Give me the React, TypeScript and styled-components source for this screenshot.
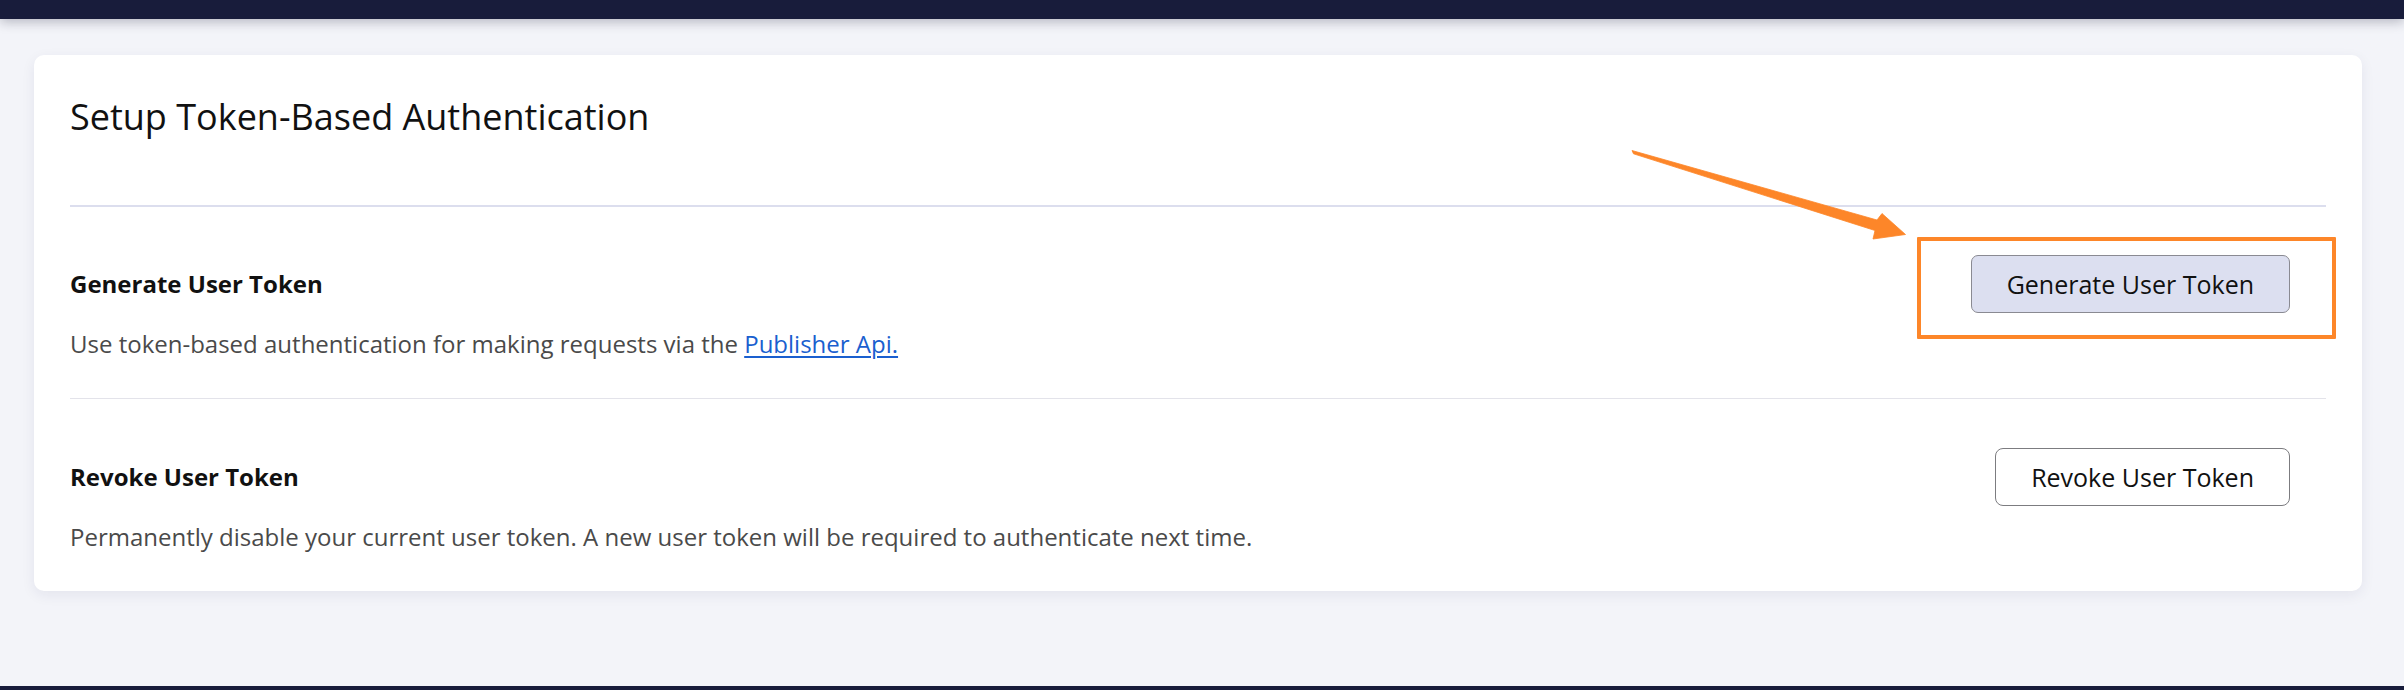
import React from "react";
import styled, { createGlobalStyle } from "styled-components";

const GlobalStyle = createGlobalStyle`
  html, body {
    margin: 0;
    padding: 0;
    background: #f3f4f9;
    font-family: "Open Sans", "Noto Sans", sans-serif;
    overflow: hidden;
  }
  * { box-sizing: border-box; }
`;

const Page = styled.div`
  position: relative;
  width: 2404px;
  height: 690px;
  display: flex;
  flex-direction: column;
  background: #f3f4f9;
`;

const TopBar = styled.div`
  height: 19px;
  flex: none;
  background: #181c3b;
  box-shadow: 0 3px 12px rgba(20, 24, 50, 0.28);
  position: relative;
  z-index: 1;
`;

const Main = styled.main`
  flex: 1;
  padding: 36px 42px 0 34px;
`;

const BottomBar = styled.div`
  height: 4px;
  flex: none;
  background: #181c3b;
`;

const Card = styled.section`
  background: #ffffff;
  border-radius: 10px;
  box-shadow: 0 4px 14px rgba(30, 35, 80, 0.07);
  padding: 37px 36px 0 36px;
`;

const Title = styled.h1`
  margin: 0;
  font-size: 36px;
  line-height: 49px;
  font-weight: 400;
  color: #111111;
  padding-bottom: 64px;
  border-bottom: 2px solid #dcdeee;
`;

const Row = styled.div<{ $last?: boolean }>`
  display: flex;
  justify-content: space-between;
  align-items: flex-start;
  padding: ${(p) => (p.$last ? "49px" : "48px")} 36px 38px 0;
  border-bottom: ${(p) => (p.$last ? "none" : "1px solid #e3e3ea")};
`;

const TextCol = styled.div`
  display: flex;
  flex-direction: column;
  gap: 28px;
  padding-top: 13px;
`;

const Heading = styled.h2`
  margin: 0;
  font-size: 24px;
  line-height: 32px;
  font-weight: 700;
  color: #111111;
`;

const Body = styled.p`
  margin: 0;
  font-size: 24px;
  line-height: 32px;
  font-weight: 400;
  color: #4a4a4a;
`;

const Link = styled.a`
  color: #1a5fcf;
  text-decoration: underline;
  text-underline-offset: 3px;
`;

const Button = styled.button<{ $primary?: boolean }>`
  height: 58px;
  padding: 0 35px;
  font-family: "Open Sans", "Noto Sans", sans-serif;
  font-size: 25px;
  font-weight: 400;
  color: #111111;
  background: ${(p) => (p.$primary ? "#dcdff0" : "#ffffff")};
  border: 1px solid ${(p) => (p.$primary ? "#8a8a92" : "#7c7c80")};
  border-radius: ${(p) => (p.$primary ? "7px" : "8px")};
  cursor: pointer;
  white-space: nowrap;
`;

const Highlight = styled.div`
  position: absolute;
  left: 1917px;
  top: 237px;
  width: 419px;
  height: 102px;
  border: 4px solid #fd8629;
  border-radius: 1px;
  pointer-events: none;
`;

const ArrowLayer = styled.svg`
  position: absolute;
  left: 0;
  top: 0;
  pointer-events: none;
`;

export default function App() {
  return (
    <>
      <GlobalStyle />
      <Page>
        <TopBar />
        <Main>
          <Card>
            <Title>Setup Token-Based Authentication</Title>
            <Row>
              <TextCol>
                <Heading>Generate User Token</Heading>
                <Body>
                  Use token-based authentication for making requests via the{" "}
                  <Link href="#">Publisher Api.</Link>
                </Body>
              </TextCol>
              <Button $primary>Generate User Token</Button>
            </Row>
            <Row $last>
              <TextCol>
                <Heading>Revoke User Token</Heading>
                <Body>
                  Permanently disable your current user token. A new user token
                  will be required to authenticate next time.
                </Body>
              </TextCol>
              <Button>Revoke User Token</Button>
            </Row>
          </Card>
        </Main>
        <BottomBar />
        <Highlight />
        <ArrowLayer width="2404" height="690" viewBox="0 0 2404 690">
          <polygon
            points="1632,150.5 1633.5,153.8 1875,230.5 1873,239 1905.5,234.5 1882,213.5 1877,220"
            fill="#fd8629"
            stroke="#fd8629"
            strokeWidth="0.8"
            strokeLinejoin="round"
          />
        </ArrowLayer>
      </Page>
    </>
  );
}
